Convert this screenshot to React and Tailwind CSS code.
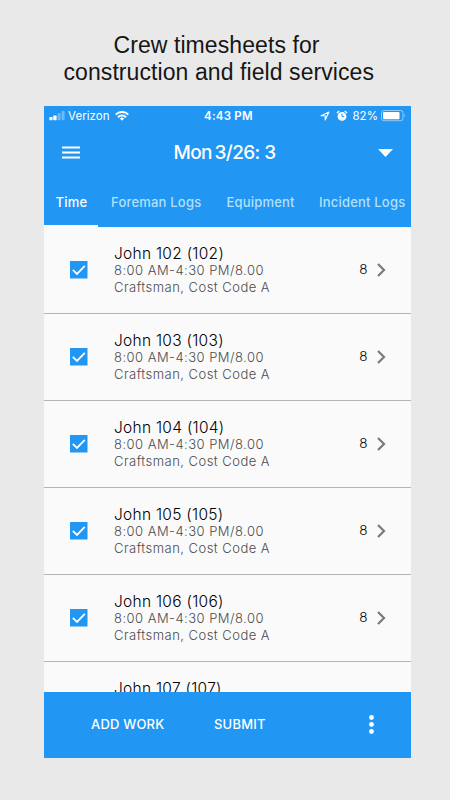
const crew = [
  { id: 102, hours: 8 },
  { id: 103, hours: 8 },
  { id: 104, hours: 8 },
  { id: 105, hours: 8 },
  { id: 106, hours: 8 },
  { id: 107, hours: 8 },
]

function StatusBar() {
  return (
    <div className="relative flex h-[20px] items-center justify-between pl-[5px] pr-[5px] text-[12px] leading-[20px]">
      <div className="flex items-center">
        <svg className="mr-[3.5px] w-[16px] h-[10px]" viewBox="0 0 16 10" fill="currentColor">
          <rect x="0.3" y="6" width="3.3" height="3.3" rx="0.7" />
          <rect x="4.3" y="4.5" width="3.3" height="4.8" rx="0.7" />
          <rect x="8.6" y="2.2" width="3" height="7.1" rx="0.7" opacity="0.35" />
          <rect x="12.6" y="0" width="3" height="9.3" rx="0.7" opacity="0.35" />
        </svg>
        <span className="w-[40px] whitespace-nowrap text-[11.5px] tracking-[0.05px]">Verizon</span>
        <svg className="ml-[6.5px] w-[14px] h-[10px]" viewBox="0 0 14 10" fill="none" stroke="currentColor" strokeWidth="2">
          <path d="M0.7 3.6a8.9 8.9 0 0 1 12.6 0" />
          <path d="M3 6.2a5.6 5.6 0 0 1 8 0" />
          <path d="M7 9.7 4.9 7.6a3 3 0 0 1 4.2 0Z" fill="currentColor" stroke="none" />
        </svg>
      </div>
      <span className="absolute left-[160.5px] whitespace-nowrap text-[11.5px] font-semibold tracking-[0.22px]">4:43 PM</span>
      <div className="flex items-center">
        <svg className="mr-px w-[10px] h-[10px]" viewBox="0 0 10 10" fill="none" stroke="currentColor" strokeWidth="1.1">
          <path d="M9 1 1 4.8h4.2V9Z" strokeLinejoin="round" />
        </svg>
        <svg className="ml-[5px] w-[12px] h-[12px]" viewBox="0 0 12 12">
          <circle cx="6" cy="6.4" r="4.4" fill="#fff" />
          <path d="M0.9 3.1 3.3 0.9M11.1 3.1 8.7 0.9" stroke="#fff" strokeWidth="1.3" fill="none" />
          <path d="M6 3.6v3h2.2" stroke="#2196f3" strokeWidth="1" fill="none" />
        </svg>
        <span className="ml-[5px] w-[25px] whitespace-nowrap text-[11.5px]">82%</span>
        <svg className="ml-[3px] w-[25px] h-[12px]" viewBox="0 0 25 12">
          <rect x="0.5" y="0.5" width="21.5" height="10.2" rx="2.2" fill="none" stroke="#fff" strokeOpacity="0.5" />
          <rect x="2" y="2" width="16.5" height="7.2" rx="1" fill="#fff" />
          <path d="M23.3 4v3.2c1.2-.4 1.2-2.8 0-3.2Z" fill="#fff" fillOpacity="0.5" />
        </svg>
      </div>
    </div>
  )
}

function Row({ id, hours }) {
  return (
    <div className="flex h-[87px] shrink-0 items-center border-b border-[#b4b4b4] pl-[26px] pr-[25px]">
      <svg className="w-[18px] h-[18px] shrink-0" viewBox="0 0 18 18">
        <rect width="17.5" height="17.5" rx="0.5" fill="#2196f3" />
        <path d="m2.8 8.8 4.2 4.1 7.8-8" fill="none" stroke="#fff" strokeWidth="1.8" />
      </svg>
      <div className="ml-[26.5px] flex-1 whitespace-nowrap pb-px">
        <div className="h-[18px] text-[15.5px] leading-[19px] tracking-[0.28px] text-[#000] font-light">John {id} ({id})</div>
        <div className="h-[16px] text-[13px] leading-[17px] tracking-[0.47px] text-[#4c4c4c] font-light">8:00 AM-4:30 PM/8.00</div>
        <div className="h-[17px] text-[13px] leading-[18px] tracking-[0.47px] text-[#4c4c4c] font-light">Craftsman, Cost Code A</div>
      </div>
      <span className="text-[13.5px] font-light text-[#000]">{hours}</span>
      <svg className="ml-[9px] w-[9px] h-[14px]" viewBox="0 0 9 14" fill="none" stroke="#7a7a7a" strokeWidth="2.2">
        <path d="m1 1 6 6-6 6" />
      </svg>
    </div>
  )
}

export default function App() {
  return (
    <div className="flex h-[800px] w-[450px] flex-col overflow-hidden bg-[#e9e9e9] font-['Inter',sans-serif]">
      <h1 className="h-[105.5px] shrink-0 pt-[32px] font-['Liberation_Sans',sans-serif] text-[23px] leading-[27px] tracking-[0.08px] text-[#161616]">
        <span className="block pl-[113.5px] whitespace-nowrap">Crew timesheets for</span>
        <span className="block pl-[63.5px] whitespace-nowrap">construction and field services</span>
      </h1>

      <div className="ml-[43.5px] flex h-[652px] w-[367px] flex-col overflow-hidden bg-[#fafafa]">
        <header className="h-[121px] shrink-0 bg-[#2196f3] text-white">
          <StatusBar />
          <div className="flex h-[54px] items-center pl-[18px] pr-[18px]">
            <svg className="w-[18px] h-[13px]" viewBox="0 0 18 13" stroke="currentColor" strokeWidth="2">
              <path d="M0 1.4h18M0 6.5h18M0 11.6h18" />
            </svg>
            <span className="ml-[94px] flex-1 whitespace-nowrap pt-px text-[19px] font-[450] tracking-[-0.6px]">
              <span className="[word-spacing:-2px]">Mon 3/26:</span> 3
            </span>
            <svg className="w-[15px] h-[8px]" viewBox="0 0 15 8" fill="currentColor">
              <path d="M0 0h15L7.5 8Z" />
            </svg>
          </div>
          <nav className="flex h-[47px] whitespace-nowrap text-[13px] font-medium leading-[44px] tracking-[0.2px] text-[#b3e0fb]">
            <span className="w-[54px] border-b-2 border-white pl-[12px] text-white">Time</span>
            <span className="w-[116px] pl-[13.5px]">Foreman Logs</span>
            <span className="w-[93px] pl-[13px]">Equipment</span>
            <span className="pl-[12.5px]">Incident Logs</span>
          </nav>
        </header>

        <main className="flex min-h-0 flex-1 flex-col overflow-hidden">
          {crew.map(c => <Row key={c.id} {...c} />)}
        </main>

        <footer className="flex h-[66px] shrink-0 items-center bg-[#2196f3] pl-[47.5px] pr-[37px] text-[13px] font-medium tracking-[0.2px] text-white">
          <span className="w-[123px]">ADD WORK</span>
          <span className="flex-1">SUBMIT</span>
          <svg className="w-[5px] h-[19px]" viewBox="0 0 5 19" fill="currentColor">
            <circle cx="2.5" cy="2.5" r="2.4" />
            <circle cx="2.5" cy="9.5" r="2.4" />
            <circle cx="2.5" cy="16.5" r="2.4" />
          </svg>
        </footer>
      </div>
    </div>
  )
}
